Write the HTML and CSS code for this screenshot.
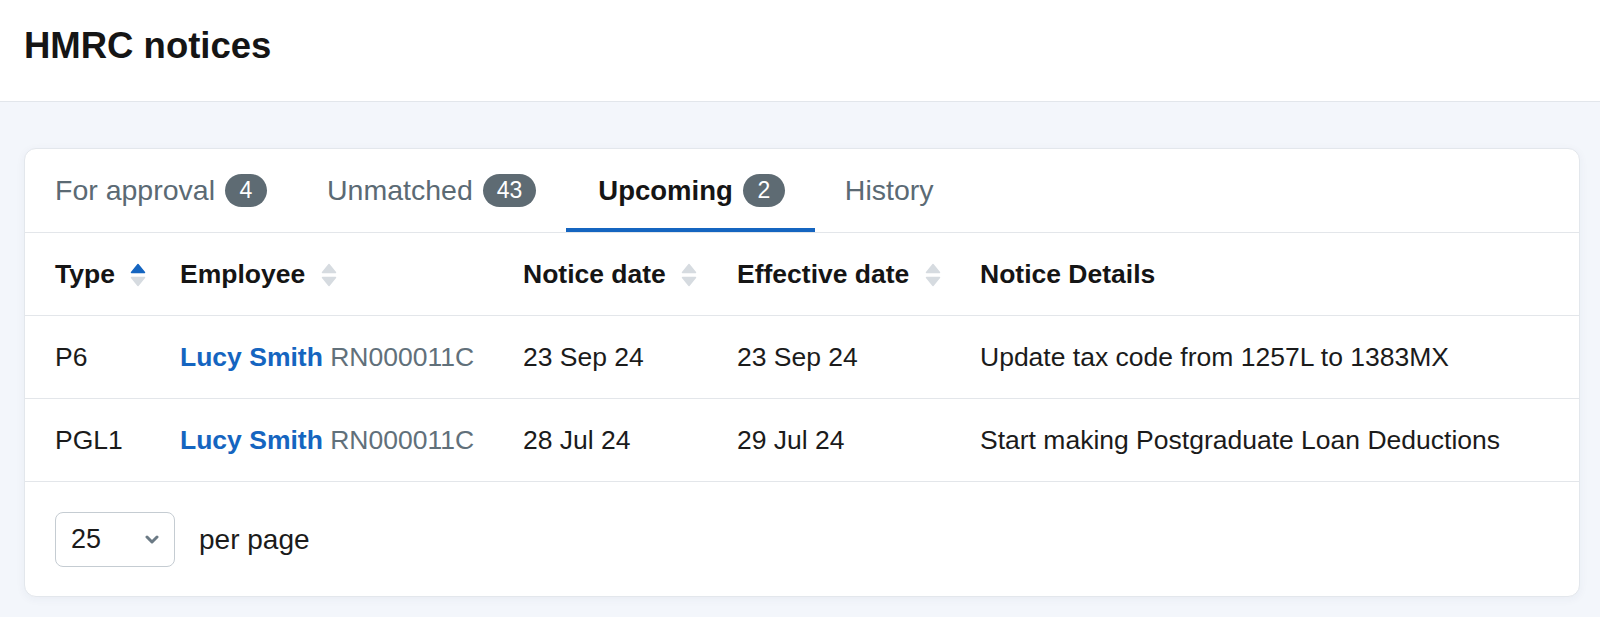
FILE: index.html
```html
<!DOCTYPE html>
<html lang="en">

<head>
  <meta charset="UTF-8">
  <meta name="viewport" content="width=device-width, initial-scale=1.0">
  <title>HMRC notices</title>
  <link rel="stylesheet" href="styles.css">
</head>

<body>
  <header class="page-header">
    <h1>HMRC notices</h1>
  </header>

  <main class="page-main">
    <div class="card">
      <nav class="tabs">
        <a class="tab">For approval <span class="badge">4</span></a>
        <a class="tab">Unmatched <span class="badge">43</span></a>
        <a class="tab active">Upcoming <span class="badge">2</span></a>
        <a class="tab">History</a>
      </nav>

      <table class="notices">
        <colgroup>
          <col style="width: 140px;">
          <col style="width: 343px;">
          <col style="width: 214px;">
          <col style="width: 243px;">
          <col>
        </colgroup>
        <thead>
          <tr>
            <th>Type <svg class="sort" viewBox="0 0 16 24"><path class="up on" d="M8 1.5 L14.5 9.5 H1.5 Z"/><path class="down" d="M1.5 14.5 H14.5 L8 22.5 Z"/></svg></th>
            <th>Employee <svg class="sort" viewBox="0 0 16 24"><path class="up" d="M8 1.5 L14.5 9.5 H1.5 Z"/><path class="down" d="M1.5 14.5 H14.5 L8 22.5 Z"/></svg></th>
            <th>Notice date <svg class="sort" viewBox="0 0 16 24"><path class="up" d="M8 1.5 L14.5 9.5 H1.5 Z"/><path class="down" d="M1.5 14.5 H14.5 L8 22.5 Z"/></svg></th>
            <th>Effective date <svg class="sort" viewBox="0 0 16 24"><path class="up" d="M8 1.5 L14.5 9.5 H1.5 Z"/><path class="down" d="M1.5 14.5 H14.5 L8 22.5 Z"/></svg></th>
            <th>Notice Details</th>
          </tr>
        </thead>
        <tbody>
          <tr>
            <td>P6</td>
            <td><a class="emp-name">Lucy Smith</a> <span class="emp-ref">RN000011C</span></td>
            <td>23 Sep 24</td>
            <td>23 Sep 24</td>
            <td>Update tax code from 1257L to 1383MX</td>
          </tr>
          <tr>
            <td>PGL1</td>
            <td><a class="emp-name">Lucy Smith</a> <span class="emp-ref">RN000011C</span></td>
            <td>28 Jul 24</td>
            <td>29 Jul 24</td>
            <td>Start making Postgraduate Loan Deductions</td>
          </tr>
        </tbody>
      </table>

      <div class="pager">
        <div class="per-page-select">
          <span>25</span>
          <svg class="chevron" viewBox="0 0 14 9"><path d="M2 2 L7 7 L12 2"/></svg>
        </div>
        <span class="per-page-label">per page</span>
      </div>
    </div>
  </main>
</body>

</html>
```

FILE: styles.css
```css
body {
  font-family: 'Liberation Sans', Arial, sans-serif;
  background: #f3f6fb;
  color: #1b1b1b;
  margin: 0;
}

.page-header {
  background: #fff;
  border-bottom: 1px solid #e2e6eb;
  padding: 25px 0 0 24px;
  box-sizing: border-box;
  height: 102px;
}

.page-header h1 {
  margin: 0;
  font-size: 36.5px;
  line-height: 41px;
  font-weight: 700;
  color: #151515;
}

.page-main {
  padding: 46px 20px 20px 24px;
}

.card {
  background: #fff;
  border: 1px solid #e3e7ec;
  border-radius: 12px;
  box-shadow: 0 2px 10px rgba(30, 50, 90, 0.05);
  overflow: hidden;
}

.tabs {
  display: flex;
  height: 83px;
  border-bottom: 1px solid #e3e6ea;
}

.tab {
  display: flex;
  align-items: center;
  gap: 10px;
  padding: 0 30px;
  font-size: 28.5px;
  color: #5b6a74;
  cursor: pointer;
}

.tab.active {
  color: #151515;
  font-weight: 700;
  font-size: 27.5px;
  padding: 0 30px 0 32px;
  box-shadow: inset 0 -4px 0 #1565c0;
}

.badge {
  display: inline-flex;
  align-items: center;
  justify-content: center;
  height: 33px;
  min-width: 42px;
  padding: 0 14px;
  box-sizing: border-box;
  border-radius: 17px;
  background: #5e6b73;
  color: #fff;
  font-size: 23px;
  font-weight: 400;
}

.notices {
  width: 100%;
  border-collapse: collapse;
  table-layout: fixed;
  font-size: 26.5px;
}

.notices th,
.notices td {
  height: 82px;
  padding: 0 15px;
  text-align: left;
  white-space: nowrap;
  border-bottom: 1px solid #e3e6ea;
}

.notices th:first-child,
.notices td:first-child {
  padding-left: 30px;
}

.notices th {
  font-weight: 700;
  color: #151515;
}

.sort {
  width: 16px;
  height: 24px;
  margin-left: 8px;
  vertical-align: -4px;
}

.sort path {
  fill: #d6dbe0;
  stroke: #d6dbe0;
  stroke-width: 1.5;
  stroke-linejoin: round;
}

.sort path.on {
  fill: #1565c0;
  stroke: #1565c0;
}

.emp-name {
  color: #1565c0;
  font-weight: 700;
  cursor: pointer;
}

.emp-ref {
  color: #61707a;
}

.pager {
  display: flex;
  align-items: center;
  padding: 30px 30px 29px;
}

.per-page-select {
  display: flex;
  align-items: center;
  justify-content: space-between;
  width: 120px;
  height: 55px;
  box-sizing: border-box;
  padding: 0 15px;
  border: 1px solid #c5ccd2;
  border-radius: 8px;
  font-size: 27px;
}

.chevron {
  width: 14px;
  height: 9px;
}

.chevron path {
  fill: none;
  stroke: #6b7a85;
  stroke-width: 3;
  stroke-linecap: round;
  stroke-linejoin: round;
}

.per-page-label {
  margin-left: 24px;
  font-size: 28px;
}
```
